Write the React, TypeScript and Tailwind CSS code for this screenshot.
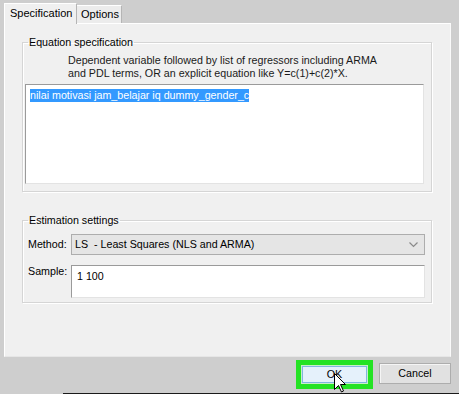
import React from 'react';

const GroupBox: React.FC<{ title: string; className?: string; children: React.ReactNode }> = ({ title, className, children }) => (
  <fieldset className={`border border-[#d5d5d5] shadow-[inset_1px_1px_0_#ffffff,1px_1px_0_#ffffff] ${className ?? ''}`}>
    <legend className="ml-[5px] px-[1px] leading-[13px]">{title}</legend>
    {children}
  </fieldset>
);

export default function App() {
  return (
    <div className="relative w-[459px] h-[394px] overflow-hidden bg-[#cecece] font-['Liberation_Sans',Arial,sans-serif] text-[10.7px] text-black">
      {/* tab strip */}
      <div className="flex items-end h-[23px] pl-[4px]">
        <div className="relative z-10 -mb-px h-[21px] w-[73px] bg-[#f0f0f0] border-t border-l border-white border-r border-r-[#b5b5b5] pl-[5px] pt-[3px] leading-[13px] text-[11px]">
          Specification
        </div>
        <div className="h-[18px] w-[45px] bg-[#ececec] border-t border-white border-r border-r-[#b5b5b5] pl-[4px] pt-[2px] leading-[13px] text-[11px]">
          Options
        </div>
      </div>

      {/* tab panel */}
      <div className="ml-[4px] w-[447px] h-[334px] bg-[#f0f0f0] border-t border-l border-white border-r border-r-[#fafafa] border-b border-b-[#e6e6e6] pt-[12px]">
        <GroupBox title="Equation specification" className="ml-[17px] w-[410px] pb-[7px]">
          <div className="pl-[45px] mt-[5px] leading-[13px] text-[#1a1a1a]">
            <div>Dependent variable followed by list of regressors including ARMA</div>
            <div>and PDL terms, OR an explicit equation like Y=c(1)+c(2)*X.</div>
          </div>
          <div className="ml-[2px] mt-[4px] w-[399px] h-[100px] bg-white border border-[#9a9a9a] border-b-[#e3e3e3] border-r-[#e3e3e3] pl-[4px] pt-[2px]">
            <span className="bg-[#3399ff] text-white leading-[13px] inline-block">nilai motivasi jam_belajar iq dummy_gender_c</span>
          </div>
        </GroupBox>

        <GroupBox title="Estimation settings" className="ml-[17px] mt-[22px] w-[410px] pb-[4px]">
          <div className="flex items-center mt-[7px]">
            <div className="w-[48px] pl-[5px]">Method:</div>
            <div className="flex items-center justify-between w-[354px] h-[21px] bg-[#e5e5e5] border border-[#adadad] pl-[3px] pr-[6px]">
              <span className="whitespace-pre">LS  - Least Squares (NLS and ARMA)</span>
              <svg width="9" height="6" viewBox="0 0 9 6" className="mt-[1px]">
                <path d="M0.5 0.5 L4.5 4.5 L8.5 0.5" fill="none" stroke="#8a8a8a" strokeWidth="1.2" />
              </svg>
            </div>
          </div>
          <div className="flex items-start mt-[10px]">
            <div className="w-[48px] pl-[5px] leading-[13px]">Sample:</div>
            <div className="w-[354px] h-[33px] bg-white border border-[#9a9a9a] border-b-[#e3e3e3] border-r-[#e3e3e3] pl-[5px] pt-[4px] leading-[13px]">
              1 100
            </div>
          </div>
        </GroupBox>
      </div>

      {/* bottom button bar */}
      <div className="flex items-start justify-end h-[37px] pr-[8px] pt-[3px] gap-[6px]">
        <div className="border-[5px] border-[#24e324] p-[1px] bg-[#c8eec8]">
          <div className="flex items-center justify-center w-[65px] h-[17px] bg-[#e5f1fb] border border-[#7fb5e0]">OK</div>
        </div>
        <div className="mt-[3px] flex items-center justify-center w-[72px] h-[21px] bg-[#e1e1e1] border border-[#adadad] shadow-[inset_1px_1px_0_#f5f5f5]">
          Cancel
        </div>
      </div>
      <div className="absolute left-[63px] right-0 bottom-0 h-px bg-[#1a1a1a]" />

      {/* mouse pointer */}
      <svg className="absolute left-[334px] top-[373px]" width="13" height="20" viewBox="0 0 13 20">
        <path d="M0.5 0.5 L0.5 16.5 L4.5 12.5 L7.5 19 L9.5 18 L6.5 11.5 L11.5 11.5 Z" fill="#ffffff" stroke="#000000" strokeWidth="1" strokeLinejoin="round" />
      </svg>
    </div>
  );
}
